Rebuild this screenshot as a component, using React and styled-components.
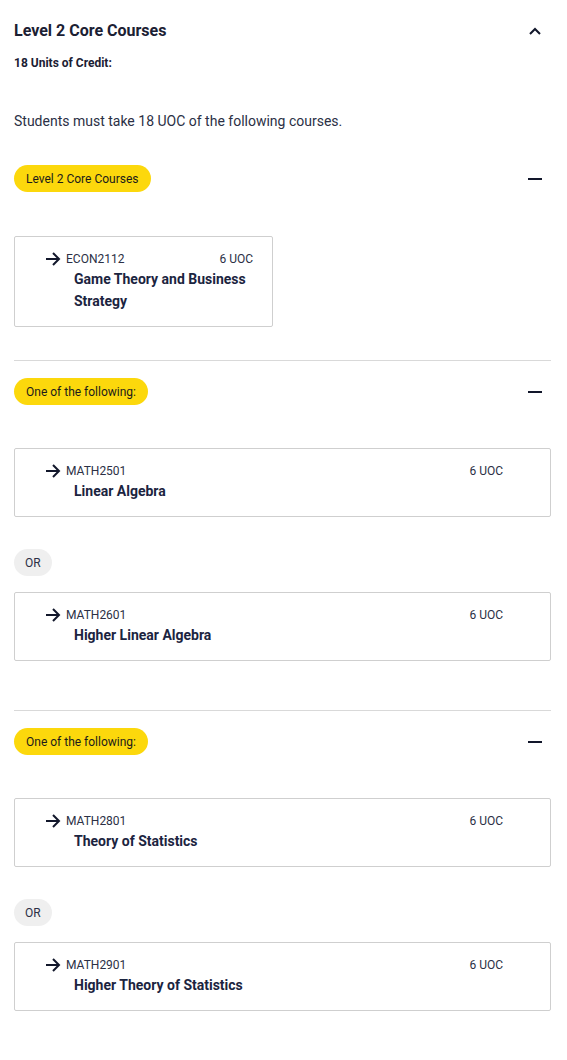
import React from "react";
import styled, { createGlobalStyle } from "styled-components";

const Global = createGlobalStyle`
  html, body { margin: 0; padding: 0; background: #fff; }
  body { font-family: Roboto, "Liberation Sans", sans-serif; color: #1b2033; }
`;

const Page = styled.div`
  padding: 19px 16px 40px 14px;
`;

const HeaderRow = styled.div`
  display: flex;
  align-items: center;
  justify-content: space-between;
  height: 24px;
`;

const Title = styled.h2`
  margin: 0;
  font-size: 16px;
  font-weight: 700;
  color: #1b2033;
  line-height: 24px;
`;

const IconBtn = styled.span`
  display: flex;
  width: 24px;
  height: 24px;
  align-items: center;
  justify-content: center;
  margin-right: 4px;
`;

const Credit = styled.div`
  margin-top: 12px;
  font-size: 12px;
  font-weight: 700;
  line-height: 16px;
  color: #1b2033;
`;

const Desc = styled.p`
  margin: 40px 0 0;
  font-size: 14px;
  line-height: 20px;
  color: #2b3045;
`;

const Section = styled.section`
  padding-top: ${(p) => p.$pt}px;
  padding-bottom: ${(p) => p.$pb}px;
  border-bottom: ${(p) => (p.$divider ? "1px solid #d9d9d9" : "none")};
`;

const GroupHead = styled.div`
  display: flex;
  align-items: center;
  justify-content: space-between;
`;

const Pill = styled.span`
  display: inline-flex;
  align-items: center;
  height: 27px;
  padding: 0 12px;
  border-radius: 14px;
  background: #fcd80c;
  font-size: 12px;
  color: #1b1b1b;
`;

const List = styled.div`
  display: flex;
  flex-direction: column;
  align-items: flex-start;
  margin-top: ${(p) => p.$mt}px;
`;

const Card = styled.div`
  box-sizing: border-box;
  width: ${(p) => (p.$narrow ? "259px" : "100%")};
  border: 1px solid #cfcfcf;
  border-radius: 2px;
  padding: 13px ${(p) => (p.$narrow ? 19 : 47)}px 14px 30px;
  background: #fff;
`;

const CardTop = styled.div`
  display: flex;
  align-items: center;
  height: 18px;
`;

const Code = styled.span`
  flex: 1;
  margin-left: 5px;
  font-size: 12px;
  color: #2b3045;
`;

const Uoc = styled.span`
  font-size: 12px;
  color: #2b3045;
`;

const CourseName = styled.div`
  padding-left: 29px;
  font-size: 14px;
  font-weight: 700;
  line-height: 22px;
  color: #1b2440;
`;

const Or = styled.span`
  display: inline-flex;
  align-items: center;
  justify-content: center;
  height: 27px;
  padding: 0 11px;
  border-radius: 14px;
  background: #efefef;
  font-size: 12px;
  color: #2b3045;
  margin: 32px 0 16px;
`;

const Arrow = () => (
  <svg width="16" height="14" viewBox="0 0 16 14" fill="none" stroke="#12172b" strokeWidth="2" strokeLinecap="butt">
    <path d="M1 7h13M8 1l6 6-6 6" />
  </svg>
);

const ChevronUp = () => (
  <svg width="14" height="10" viewBox="0 0 14 10" fill="none" stroke="#12172b" strokeWidth="2">
    <path d="M2 8l5-5 5 5" />
  </svg>
);

const Minus = () => (
  <svg width="16" height="4" viewBox="0 0 16 4">
    <rect x="1" y="1" width="14" height="2" fill="#12172b" />
  </svg>
);

const CourseCard = ({ code, name, narrow }) => (
  <Card $narrow={narrow}>
    <CardTop>
      <Arrow />
      <Code>{code}</Code>
      <Uoc>6 UOC</Uoc>
    </CardTop>
    <CourseName>{name}</CourseName>
  </Card>
);

const groups = [
  {
    label: "One of the following:",
    courses: [
      { code: "MATH2501", name: "Linear Algebra" },
      { code: "MATH2601", name: "Higher Linear Algebra" },
    ],
    divider: true,
  },
  {
    label: "One of the following:",
    courses: [
      { code: "MATH2801", name: "Theory of Statistics" },
      { code: "MATH2901", name: "Higher Theory of Statistics" },
    ],
    divider: false,
  },
];

export default function App() {
  return (
    <>
      <Global />
      <Page>
        <HeaderRow>
          <Title>Level 2 Core Courses</Title>
          <IconBtn><ChevronUp /></IconBtn>
        </HeaderRow>
        <Credit>18 Units of Credit:</Credit>
        <Desc>Students must take 18 UOC of the following courses.</Desc>

        <Section $pt={34} $pb={33} $divider>
          <GroupHead>
            <Pill>Level 2 Core Courses</Pill>
            <IconBtn><Minus /></IconBtn>
          </GroupHead>
          <List $mt={44}>
            <CourseCard narrow code="ECON2112" name={<>Game Theory and Business<br />Strategy</>} />
          </List>
        </Section>

        {groups.map((g, gi) => (
          <Section key={gi} $pt={17} $pb={g.divider ? 49 : 0} $divider={g.divider}>
            <GroupHead>
              <Pill>{g.label}</Pill>
              <IconBtn><Minus /></IconBtn>
            </GroupHead>
            <List $mt={43}>
              {g.courses.map((c, i) => (
                <React.Fragment key={c.code}>
                  {i > 0 && <Or>OR</Or>}
                  <CourseCard code={c.code} name={c.name} />
                </React.Fragment>
              ))}
            </List>
          </Section>
        ))}
      </Page>
    </>
  );
}
